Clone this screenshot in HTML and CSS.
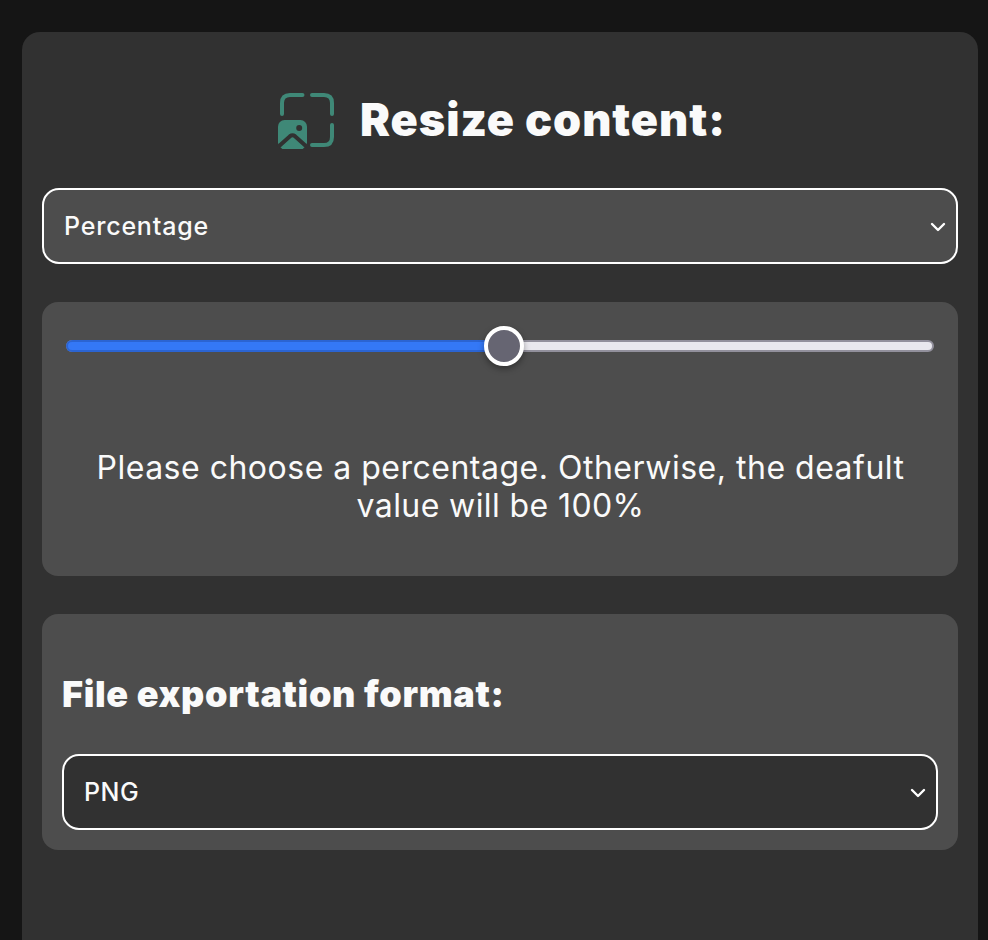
FILE: index.html
```html
<!DOCTYPE html>
<html lang="en">
<head>
<meta charset="utf-8">
<title>Resize content</title>
<link rel="stylesheet" href="styles.css">
</head>
<body>
<main class="panel">
  <header class="heading">
    <svg class="logo" viewBox="0 0 60 60" fill="none">
      <g stroke="#3f8877" stroke-width="4" stroke-linecap="round">
        <path d="M6 22V11Q6 3 14 3H26.500"/>
        <path d="M36 3H48Q56 3 56 11V22"/>
        <path d="M56 33V45Q56 53 48 53H36"/>
      </g>
      <rect x="2" y="28" width="29" height="29" rx="6.500" fill="#3f8877"/>
      <circle cx="23.200" cy="36" r="3" fill="#313131"/>
      <path d="M2 55L14 44.200Q16.500 42.300 19 44.200L31 55" stroke="#313131" stroke-width="4"/>
      <path d="M5.500 57L15 47.500Q16.500 46.200 18 47.500L27.500 57Z" fill="#3f8877"/>
    </svg>
    <h1 class="title">Resize content:</h1>
  </header>
  <div class="select">
    <span class="value">Percentage</span>
    <svg class="chevron" viewBox="0 0 16 10"><path d="M2 2L8 8L14 2"/></svg>
  </div>
  <section class="card scale">
    <div class="track"><div class="fill"></div><div class="thumb"></div></div>
    <p class="hint"><span class="hint-first">Please choose a percentage. Otherwise, the deafult</span><br><span class="hint-last">value will be 100%</span></p>
  </section>
  <section class="card export">
    <h2 class="subtitle">File exportation format:</h2>
    <div class="select dark">
      <span class="value short">PNG</span>
      <svg class="chevron" viewBox="0 0 16 10"><path d="M2 2L8 8L14 2"/></svg>
    </div>
  </section>
</main>
</body>
</html>
```
FILE: styles.css
```css
* { box-sizing: border-box; }
html { background: #151515; }
body {
  margin: 0;
  padding: 32px 10px 0 22px;
  height: 940px;
  font-family: Inter, "Liberation Sans", sans-serif;
  color: #fafafa;
}
.panel {
  height: 908px;
  padding: 60px 20px 0;
  border-radius: 18px 18px 0 0;
  background: #313131;
}
.heading {
  display: flex;
  height: 96px;
  padding-left: 234px;
}
.logo { width: 60px; height: 60px; flex: none; }
.title {
  margin: 0 0 0 24px;
  font-size: 45px;
  line-height: 56px;
  font-weight: 900;
  letter-spacing: 0.95px;
  white-space: nowrap;
}
.select {
  display: flex;
  align-items: center;
  justify-content: space-between;
  height: 76px;
  padding: 0 10px 0 20px;
  border: 2px solid #fff;
  border-radius: 17px;
  background: #4d4d4d;
}
.dark { background: #313131; }
.value { font-size: 25px; font-weight: 450; letter-spacing: 0.8px; }
.short { letter-spacing: 0.5px; }
.chevron {
  width: 16px;
  height: 10px;
  margin-top: 2px;
  fill: none;
  stroke: #fff;
  stroke-width: 2.4;
  stroke-linecap: round;
  stroke-linejoin: round;
}
.card {
  margin-top: 38px;
  border-radius: 16px;
  background: #4d4d4d;
}
.scale { height: 274px; padding: 38px 24px 0; }
.track {
  display: flex;
  align-items: center;
  height: 12px;
  border: 2px solid #92909c;
  border-radius: 6px;
  background: #e9e8ee;
}
.fill {
  width: 436px;
  height: 12px;
  margin-left: -2px;
  border: 2px solid #2b64d2;
  border-right: 0;
  border-radius: 6px 0 0 6px;
  background: #3478f6;
}
.thumb {
  flex: none;
  width: 40px;
  height: 40px;
  margin-left: -18px;
  border: 4px solid #fff;
  border-radius: 50%;
  background: #666572;
  box-shadow: 0 3px 6px rgba(0, 0, 0, 0.35);
}
.hint {
  margin: 97px 0 0 1px;
  font-size: 32px;
  line-height: 38px;
  text-align: center;
  white-space: nowrap;
}
.hint-first { letter-spacing: 0.5px; }
.hint-last { letter-spacing: 0.4px; }
.export { height: 236px; padding: 59px 20px 0; }
.subtitle {
  margin: -1px 0 38px;
  font-size: 36px;
  line-height: 44px;
  font-weight: 900;
  letter-spacing: 0.66px;
  white-space: nowrap;
}
```
